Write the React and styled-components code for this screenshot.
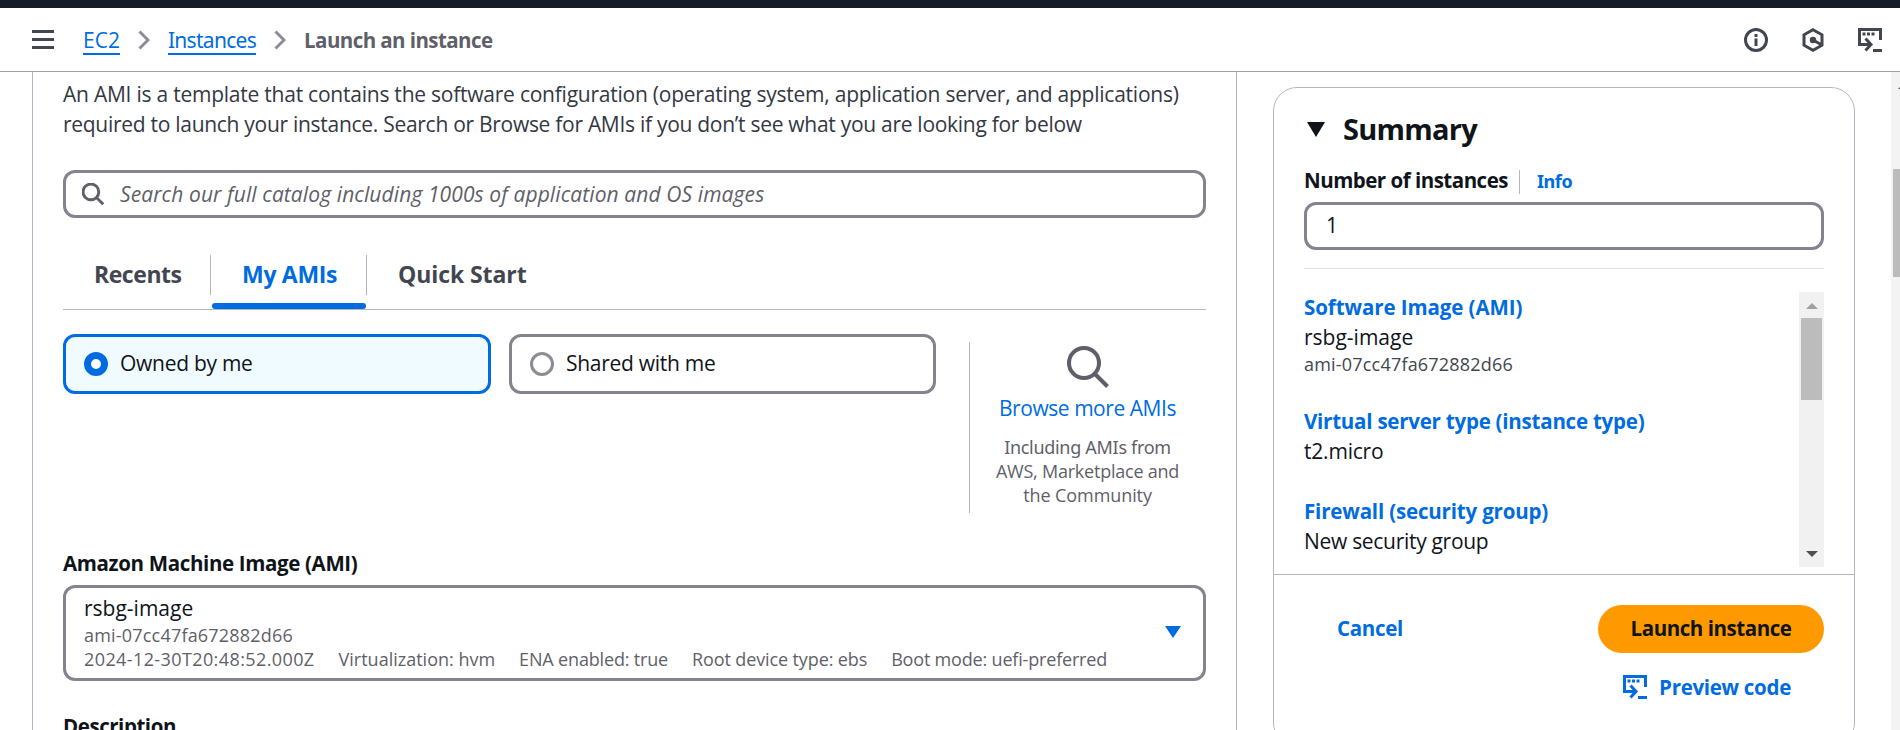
import React from 'react';
import styled, { createGlobalStyle, css } from 'styled-components';

const color = {
  text: '#0f141a',
  body: '#333843',
  muted: '#5f5f69',
  link: '#006ce0',
  field: '#84848e',
  line: '#b6b6c2',
};
const sans = '"Open Sans", "Noto Sans", sans-serif';

const GlobalStyle = createGlobalStyle`
  *, *::before, *::after { box-sizing: border-box; }
  body { margin: 0; background: #fff; overflow: hidden; }
`;

const Page = styled.div`
  display: flex;
  flex-direction: column;
  width: 1900px;
  height: 730px;
  overflow: hidden;
  background: #fff;
  color: ${color.text};
  font: 21px/30px ${sans};
  white-space: nowrap;
`;

const TopStrip = styled.div`
  flex: none;
  height: 8px;
  background: #161d28;
`;

/* Header bar */
const Header = styled.header`
  flex: none;
  display: flex;
  align-items: center;
  height: 64px;
  padding: 0 18px 0 32px;
  border-bottom: 1px solid #9a9fab;
`;

const MenuButton = styled.div`
  display: flex;
  flex-direction: column;
  gap: 5px;
  width: 22px;
  margin-right: 29px;
  i { height: 3px; background: #424650; }
`;

const Crumbs = styled.nav`
  display: flex;
  align-items: center;
  flex: 1;
`;

const CrumbLink = styled.a`
  height: 30px;
  line-height: 30px;
  color: ${color.link};
  border-bottom: 2px solid ${color.link};
  font-family: ${(p) => (p.$serifI ? '"Noto Sans", sans-serif' : 'inherit')};
  letter-spacing: ${(p) => p.$track || 0}px;
`;

const CrumbCurrent = styled.span`
  color: #5f5f69;
  font-weight: 700;
  font-size: 20.5px;
  letter-spacing: -0.58px;
`;

const CrumbArrow = styled.svg`
  width: 12px;
  height: 20px;
  margin: 0 18px;
  fill: none;
  stroke: #8c8c94;
  stroke-width: 3;
`;

const Tools = styled.div`
  display: flex;
  align-items: center;
  gap: 33px;
  color: #424650;
`;

const Icon = styled.svg`
  flex: none;
  display: block;
  width: ${(p) => p.$size || 24}px;
  height: ${(p) => p.$size || 24}px;
  fill: none;
  stroke: currentColor;
  stroke-width: ${(p) => p.$stroke || 3};
`;

/* Body columns */
const Body = styled.div`
  flex: 1;
  display: flex;
  align-items: flex-start;
  min-height: 0;
`;

const Panel = styled.main`
  width: 1205px;
  height: 700px;
  margin-left: 32px;
  padding: 7px 30px 0;
  border: solid ${color.line};
  border-width: 0 1px;
`;

const Intro = styled.p`
  margin: 0;
  color: ${color.body};
`;
const IntroLine = styled.span`
  display: block;
  letter-spacing: ${(p) => p.$track}px;
`;

const fieldBox = css`
  border: 3px solid ${color.field};
  border-radius: 12px;
`;

const SearchField = styled.div`
  ${fieldBox}
  display: flex;
  align-items: center;
  gap: 16px;
  height: 48px;
  margin-top: 31px;
  padding: 0 16px;
  color: ${color.muted};
  font-style: italic;
  letter-spacing: 0.1px;
`;

const Tabs = styled.div`
  display: flex;
  height: 71px;
  margin-top: 21px;
  padding-top: 16px;
  border-bottom: 1px solid ${color.line};
`;

const Tab = styled.div`
  position: relative;
  width: ${(p) => p.$width}px;
  height: 54px;
  padding: 3px 0 0 ${(p) => p.$indent}px;
  color: ${(p) => (p.$active ? color.link : '#424650')};
  font-size: 23px;
  font-weight: 700;
  line-height: 33px;
  letter-spacing: ${(p) => p.$track}px;

  &:not(:first-child)::before {
    content: '';
    position: absolute;
    left: 0;
    top: 0;
    height: 40px;
    border-left: 1px solid ${color.line};
  }
  ${(p) => p.$active && css`
    &::after {
      content: '';
      position: absolute;
      left: 2px;
      right: 0;
      bottom: 0;
      height: 6px;
      border-radius: 3px;
      background: ${color.link};
    }
  `}
`;

const Owners = styled.div`
  display: flex;
  align-items: flex-start;
  margin-top: 24px;
`;

const Tile = styled.div`
  display: flex;
  align-items: center;
  gap: 12px;
  width: ${(p) => p.$width}px;
  height: 60px;
  margin-right: 18px;
  padding-left: 18px;
  border: 3px solid ${(p) => (p.$on ? color.link : color.field)};
  border-radius: 12px;
  background: ${(p) => (p.$on ? '#f0fbff' : '#fff')};
`;
const TileLabel = styled.span`
  padding-bottom: 2px;
  letter-spacing: -0.28px;
`;

const Radio = styled.span`
  width: 24px;
  height: 24px;
  border: ${(p) => (p.$on ? `7px solid ${color.link}` : '3px solid #8c8c94')};
  border-radius: 50%;
  background: #fff;
`;

const Browse = styled.aside`
  display: flex;
  flex-direction: column;
  align-items: center;
  width: 236px;
  height: 171px;
  margin: 8px 0 0 15px;
  padding-top: 4px;
  border-left: 1px solid ${color.line};
  color: ${color.muted};
`;
const BrowseLink = styled.a`
  margin-top: 5px;
  color: ${color.link};
  letter-spacing: -0.45px;
`;
const BrowseNote = styled.span`
  font-size: 18px;
  line-height: 24px;
  font-family: ${(p) => (p.$serifI ? '"Noto Sans", sans-serif' : 'inherit')};
  letter-spacing: ${(p) => p.$track}px;
  margin-top: ${(p) => p.$top || 0}px;
`;

const Label = styled.div`
  font-size: 20.5px;
  font-weight: 700;
  letter-spacing: ${(p) => p.$track}px;
  margin-top: ${(p) => p.$top || 0}px;
`;

const Select = styled.div`
  ${fieldBox}
  display: flex;
  align-items: center;
  justify-content: space-between;
  height: 96px;
  margin-top: 7px;
  padding: 0 22px 2px 18px;
`;
const SelectText = styled.div`
  display: flex;
  flex-direction: column;
`;
const Meta = styled.span`
  display: flex;
  gap: 24px;
  color: ${color.muted};
  font-size: 18px;
  line-height: 24px;
`;
const Tracked = styled.span`
  letter-spacing: ${(p) => p.$track}px;
`;

const Caret = styled.svg`
  flex: none;
  width: ${(p) => p.$w}px;
  height: ${(p) => p.$h}px;
  fill: ${(p) => p.$fill};
`;

/* Summary card */
const Card = styled.section`
  display: flex;
  flex-direction: column;
  width: 582px;
  height: 660px;
  margin: 15px 0 0 36px;
  border: 1px solid ${color.line};
  border-radius: 24px;
`;
const CardBody = styled.div`
  padding: 23px 30px 7px;
  border-bottom: 1px solid ${color.line};
`;
const CardTitle = styled.h2`
  display: flex;
  align-items: center;
  gap: 18px;
  height: 36px;
  margin: 0 0 18px;
  padding-left: 3px;
  font-size: 29px;
  line-height: 36px;
  letter-spacing: -0.75px;
`;
const LabelRow = styled.div`
  display: flex;
  align-items: center;
`;
const InfoLink = styled.a`
  height: 24px;
  margin: 3px 0 0 11px;
  padding-left: 17px;
  border-left: 1px solid ${color.line};
  color: ${color.link};
  font: 700 18px/23px "Noto Sans", sans-serif;
  letter-spacing: -0.4px;
`;
const NumberField = styled.div`
  ${fieldBox}
  height: 48px;
  margin-top: 7px;
  padding: 5px 19px;
`;
const Rule = styled.div`
  height: 1px;
  margin: 18px 0 23px;
  background: #dedee3;
`;
const ScrollArea = styled.div`
  display: flex;
  justify-content: space-between;
  height: 275px;
`;
const Items = styled.div`
  display: flex;
  flex-direction: column;
  gap: 30px;
`;
const Item = styled.div`
  display: flex;
  flex-direction: column;
`;
const ItemLink = styled.a`
  color: ${color.link};
  font-size: 20.5px;
  font-weight: 700;
  letter-spacing: ${(p) => p.$track}px;
`;
const ItemId = styled.span`
  color: #424650;
  font-size: 18px;
  line-height: 24px;
  letter-spacing: 0.2px;
`;
const Track = styled.div`
  display: flex;
  flex-direction: column;
  align-items: center;
  width: 25px;
  padding: 11px 2px 10px;
  background: #f1f1f1;
`;
const Thumb = styled.div`
  width: 21px;
  height: 82px;
  margin: 9px 0 auto;
  background: #bcbcbc;
`;

const Footer = styled.footer`
  display: flex;
  flex-direction: column;
  align-items: flex-end;
  gap: 19px;
  padding: 30px 30px 0;
`;
const Actions = styled.div`
  display: flex;
  align-items: center;
  justify-content: space-between;
  width: 100%;
  padding-left: 33px;
`;
const TextButton = styled.a`
  display: flex;
  align-items: center;
  gap: 12px;
  margin-right: ${(p) => p.$right || 0}px;
  padding-bottom: ${(p) => p.$lift || 0}px;
  color: ${color.link};
  font-size: 20.5px;
  font-weight: 700;
  letter-spacing: -0.3px;
`;
const LaunchButton = styled.button`
  width: 226px;
  height: 48px;
  padding: 0 0 2px;
  border: 0;
  border-radius: 24px;
  background: #ff9900;
  color: ${color.text};
  font: 700 20.5px/30px ${sans};
  letter-spacing: -0.45px;
`;

const PageTrack = styled.div`
  display: flex;
  flex-direction: column;
  width: 9px;
  height: 658px;
  margin-left: auto;
  padding: 11px 0 0 2px;
  background: #f3f3f3;
  overflow: hidden;
`;
const PageThumb = styled.div`
  height: 108px;
  margin-top: 80px;
  background: #bcbcbc;
`;
const PageArrow = styled(Caret)`
  margin-left: 5px;
`;

const Down = ({ w, h, fill }) => (
  <Caret $w={w} $h={h} $fill={fill} viewBox="0 0 16 12" preserveAspectRatio="none">
    <path d="M0 0H16L8 12Z" />
  </Caret>
);

const SearchIcon = ({ size, stroke }) => (
  <Icon $size={size} $stroke={stroke} viewBox="0 0 42 42">
    <circle cx="17" cy="17" r="15" />
    <path d="M28 28L40.500 40.500" />
  </Icon>
);

const ShellIcon = () => (
  <Icon viewBox="0 0 24 24">
    <path d="M22.500 12V1.500H1.500V16.500H11.500" />
    <path d="M7.500 10.500L13 16.500L7.500 22.500M15 22.500H24" />
    <path d="M4.500 6H16.500" strokeDasharray="3 1.500" />
  </Icon>
);

const Chevron = () => (
  <CrumbArrow viewBox="0 0 12 20">
    <path d="M1.500 1.500L10 10L1.500 18.500" />
  </CrumbArrow>
);

export default function App() {
  return (
    <Page>
      <GlobalStyle />
      <TopStrip />
      <Header>
        <MenuButton><i /><i /><i /></MenuButton>
        <Crumbs>
          <CrumbLink>EC2</CrumbLink>
          <Chevron />
          <CrumbLink $serifI $track={-0.7}>Instances</CrumbLink>
          <Chevron />
          <CrumbCurrent>Launch an instance</CrumbCurrent>
        </Crumbs>
        <Tools>
          <Icon viewBox="0 0 24 24">
            <circle cx="12" cy="12" r="10.500" />
            <path d="M12 6V9M12 10.500V18" />
          </Icon>
          <Icon viewBox="0 0 24 24">
            <path d="M12 1.700L21 6.800V17.200L12 22.300L3 17.200V6.800Z" />
            <circle cx="12" cy="12" r="1.700" />
            <path d="M12 12L21 17" />
          </Icon>
          <ShellIcon />
        </Tools>
      </Header>
      <Body>
        <Panel>
          <Intro>
            <IntroLine $track={-0.235}>An AMI is a template that contains the software configuration (operating system, application server, and applications)</IntroLine>
            <IntroLine $track={-0.285}>required to launch your instance. Search or Browse for AMIs if you don’t see what you are looking for below</IntroLine>
          </Intro>
          <SearchField>
            <SearchIcon size={22} stroke={5.5} />
            Search our full catalog including 1000s of application and OS images
          </SearchField>
          <Tabs>
            <Tab $width={147} $indent={31} $track={-0.45}>Recents</Tab>
            <Tab $width={156} $indent={32} $track={-0.3} $active>My AMIs</Tab>
            <Tab $width={190} $indent={32} $track={-0.08}>Quick Start</Tab>
          </Tabs>
          <Owners>
            <Tile $width={428} $on><Radio $on /><TileLabel>Owned by me</TileLabel></Tile>
            <Tile $width={427}><Radio /><TileLabel>Shared with me</TileLabel></Tile>
            <Browse>
              <SearchIcon size={42} stroke={4} />
              <BrowseLink>Browse more AMIs</BrowseLink>
              <BrowseNote $serifI $track={-0.3} $top={12}>Including AMIs from</BrowseNote>
              <BrowseNote $track={-0.23}>AWS, Marketplace and</BrowseNote>
              <BrowseNote $track={-0.08}>the Community</BrowseNote>
            </Browse>
          </Owners>
          <Label $track={-0.35} $top={35}>Amazon Machine Image (AMI)</Label>
          <Select>
            <SelectText>
              <span>rsbg-image</span>
              <Meta><Tracked $track={0.2}>ami-07cc47fa672882d66</Tracked></Meta>
              <Meta>
                <Tracked $track={0.4}>2024-12-30T20:48:52.000Z</Tracked>
                <Tracked $track={0}>Virtualization: hvm</Tracked>
                <Tracked $track={-0.165}>ENA enabled: true</Tracked>
                <Tracked $track={-0.12}>Root device type: ebs</Tracked>
                <Tracked $track={-0.18}>Boot mode: uefi-preferred</Tracked>
              </Meta>
            </SelectText>
            <Down w={16} h={12} fill={color.link} />
          </Select>
          <Label $track={-0.45} $top={30}>Description</Label>
        </Panel>
        <Card>
          <CardBody>
            <CardTitle><Down w={18} h={15} fill={color.text} />Summary</CardTitle>
            <LabelRow>
              <Label $track={-0.5}>Number of instances</Label>
              <InfoLink>Info</InfoLink>
            </LabelRow>
            <NumberField>1</NumberField>
            <Rule />
            <ScrollArea>
              <Items>
                <Item>
                  <ItemLink $track={-0.08}>Software Image (AMI)</ItemLink>
                  <span>rsbg-image</span>
                  <ItemId>ami-07cc47fa672882d66</ItemId>
                </Item>
                <Item>
                  <ItemLink $track={-0.23}>Virtual server type (instance type)</ItemLink>
                  <Tracked $track={-0.2}>t2.micro</Tracked>
                </Item>
                <Item>
                  <ItemLink $track={-0.17}>Firewall (security group)</ItemLink>
                  <Tracked $track={-0.3}>New security group</Tracked>
                </Item>
              </Items>
              <Track>
                <Caret $w={12} $h={6} $fill="#a0a0a0" viewBox="0 0 12 6"><path d="M0 6H12L6 0Z" /></Caret>
                <Thumb />
                <Down w={12} h={6} fill="#505050" />
              </Track>
            </ScrollArea>
          </CardBody>
          <Footer>
            <Actions>
              <TextButton $lift={2}>Cancel</TextButton>
              <LaunchButton>Launch instance</LaunchButton>
            </Actions>
            <TextButton $right={33}><ShellIcon />Preview code</TextButton>
          </Footer>
        </Card>
        <PageTrack>
          <PageArrow $w={12} $h={6} $fill="#505050" viewBox="0 0 12 6"><path d="M0 6H12L6 0Z" /></PageArrow>
          <PageThumb />
        </PageTrack>
      </Body>
    </Page>
  );
}
